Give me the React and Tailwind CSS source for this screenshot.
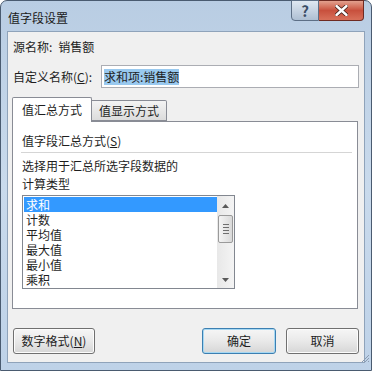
import React from 'react';

const items = ['求和', '计数', '平均值', '最大值', '最小值', '乘积'];

const Btn = ({ children, primary, className = '' }) => (
	<button
		className={`h-[26px] rounded-[3px] border text-[12px] text-[#1e1e1e] bg-gradient-to-b from-[#f6f6f6] via-[#e9e9e9] to-[#d6d6d6] ${
			primary
				? 'border-[#3c7fb1] shadow-[inset_0_0_0_1px_#a6d8f3]'
				: 'border-[#707070] shadow-[inset_0_0_0_1px_#fcfcfc]'
		} ${className}`}>
		{children}
	</button>
);

const ScrollBar = () => (
	<div className="w-[17px] h-full bg-gradient-to-r from-[#e8e8e8] to-[#f4f4f4] flex flex-col items-center">
		<div className="h-[17px] flex items-center justify-center mt-[1px]">
			<svg width="7" height="4" viewBox="0 0 7 4">
				<path d="M0 4 L3.5 0 L7 4 Z" fill="#5a5a5a" />
			</svg>
		</div>
		<div className="mt-[1px] w-[15px] h-[28px] rounded-[2px] border border-[#9a9a9a] bg-gradient-to-r from-[#f4f4f4] to-[#d9d9d9] flex flex-col items-center justify-center gap-[2px]">
			<div className="w-[6px] h-[1px] bg-[#6e6e6e]" />
			<div className="w-[6px] h-[1px] bg-[#6e6e6e]" />
			<div className="w-[6px] h-[1px] bg-[#6e6e6e]" />
			<div className="w-[6px] h-[1px] bg-[#6e6e6e]" />
		</div>
		<div className="flex-1" />
		<div className="h-[17px] flex items-center justify-center">
			<svg width="7" height="4" viewBox="0 0 7 4">
				<path d="M0 0 L3.5 4 L7 0 Z" fill="#5a5a5a" />
			</svg>
		</div>
	</div>
);

export default function App() {
	return (
		<div className="w-[372px] h-[371px] overflow-hidden bg-white font-['Noto_Sans_CJK_SC','Microsoft_YaHei',sans-serif] text-[12px] text-[#1e1e1e]">
			<div className="w-[372px] h-[371px] flex flex-col rounded-t-[7px] border border-[#4a5b70] bg-gradient-to-b from-[#b9cde3] via-[#c9daec] to-[#bed2e8]">
				{/* title bar */}
				<div className="h-[30px] flex items-start justify-between">
					<div className="pl-[7px] pt-[8px] text-[12px] leading-[18px] text-[#1a1a1a]">
						值字段设置
					</div>
					<div className="flex mr-[7px] -mt-[1px]">
						<div className="w-[28px] h-[21px] rounded-bl-[4px] border border-[#5d6f86] bg-gradient-to-b from-[#dfe8f2] to-[#aebfd3] flex items-center justify-center text-[#3c4e66] text-[15px] font-bold leading-none">
							?
						</div>
						<div className="w-[45px] h-[21px] rounded-br-[4px] border border-l-0 border-[#6e2a22] bg-gradient-to-b from-[#e2a08e] via-[#c8503d] to-[#d8705a] flex items-center justify-center">
							<svg width="13" height="11" viewBox="0 0 13 11">
								<path
									d="M1.5 1 L11.5 10 M11.5 1 L1.5 10"
									stroke="#3a1a14"
									strokeWidth="4"
									strokeLinecap="round"
								/>
								<path
									d="M1.5 1 L11.5 10 M11.5 1 L1.5 10"
									stroke="#ffffff"
									strokeWidth="2.4"
									strokeLinecap="round"
								/>
							</svg>
						</div>
					</div>
				</div>

				{/* client */}
				<div className="mx-[6px] h-[332px] border border-[#8fa3ba] bg-[#f0f0f0] flex flex-col">
					<div className="pl-[5px] pt-[7px] leading-[16px] flex">
						<span>源名称:</span>
						<span className="ml-[6px]">销售额</span>
					</div>

					<div className="mt-[10px] flex items-center pl-[5px]">
						<div className="w-[88px] leading-[16px]">
							自定义名称(<span className="underline">C</span>):
						</div>
						<div className="w-[258px] h-[23px] border border-[#abadb3] bg-white flex items-center px-[2px]">
							<span className="bg-[#99c9ef] leading-[16px]">求和项:销售额</span>
						</div>
					</div>

					{/* tabs */}
					<div className="mt-[9px] ml-[4px] flex items-end">
						<div className="w-[80px] h-[25px] -mb-[1px] z-10 border border-b-0 border-[#898c95] bg-white rounded-t-[2px] flex items-center justify-center leading-[16px]">
							值汇总方式
						</div>
						<div className="w-[75px] h-[21px] border border-l-0 border-[#898c95] bg-gradient-to-b from-[#f3f3f3] to-[#dcdcdc] rounded-tr-[2px] flex items-center justify-center leading-[16px]">
							值显示方式
						</div>
					</div>
					<div className="ml-[4px] w-[346px] h-[188px] border border-[#898c95] bg-white flex flex-col">
						<div className="pl-[9px] pt-[11px] leading-[16px]">
							值字段汇总方式(<span className="underline">S</span>)
						</div>
						<div className="mt-[3px] ml-[8px] mr-[5px] h-[1px] bg-[#d5d5d5]" />
						<div className="pl-[9px] mt-[4px] leading-[18px]">
							选择用于汇总所选字段数据的
							<br />
							计算类型
						</div>
						<div className="ml-[9px] mt-[2px] w-[213px] h-[94px] border border-[#828790] bg-white flex">
							<div className="flex-1 pt-[1px] pl-[1px] flex flex-col">
								{items.map((it, i) => (
									<div
										key={it}
										className={`h-[15px] pl-[2px] leading-[15px] text-[12px] ${
											i === 0 ? 'bg-[#3399ff] text-white' : ''
										}`}>
										{it}
									</div>
								))}
							</div>
							<ScrollBar />
						</div>
					</div>

					{/* buttons */}
					<div className="mt-[19px] pl-[5px] pr-[5px] flex items-center">
						<Btn className="w-[82px]">
							数字格式(<span className="underline">N</span>)
						</Btn>
						<div className="flex-1" />
						<Btn primary className="w-[74px]">
							确定
						</Btn>
						<Btn className="w-[73px] ml-[10px]">取消</Btn>
					</div>
				</div>

				{/* bottom frame with grip */}
				<div className="flex-1 flex justify-end items-start pr-[1px]">
					<svg width="9" height="9" viewBox="0 0 9 9" className="-mt-[9px]">
						<path d="M8 1 L1 8 M8 4 L4 8 M8 7 L7 8" stroke="#8b9bb0" strokeWidth="1" />
					</svg>
				</div>
			</div>
		</div>
	);
}
